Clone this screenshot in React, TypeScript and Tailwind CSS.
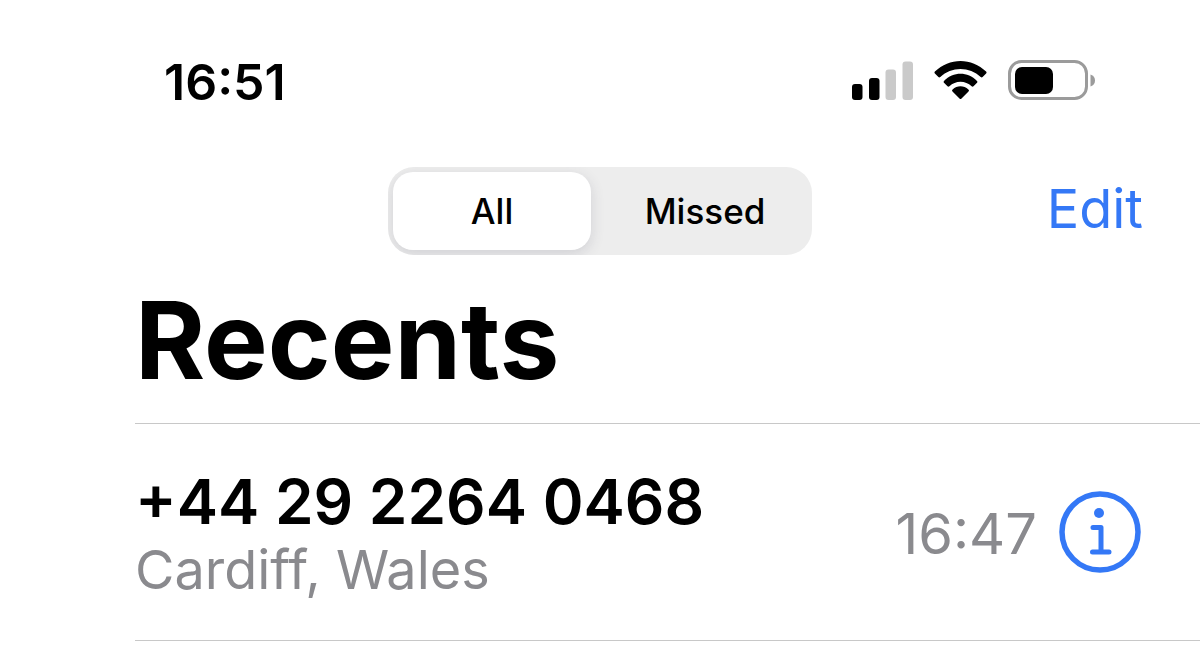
import { useState } from 'react'

interface Call {
  number: string
  place: string
  time: string
}

const calls: Call[] = [{ number: '+44 29 2264 0468', place: 'Cardiff, Wales', time: '16:47' }]

const tabs = ['All', 'Missed']

function SignalIcon() {
  return (
    <svg className="h-10 w-[62px]" viewBox="0 0 62 40" role="img" aria-label="Signal">
      <rect x="0" y="24" width="10.5" height="16" rx="3" fill="#000" />
      <rect x="17" y="18" width="10.5" height="22" rx="3" fill="#000" />
      <rect x="33.500" y="9.500" width="10.500" height="30.500" rx="3" fill="#cacaca" />
      <rect x="50.500" y="1.500" width="10.500" height="38.500" rx="3" fill="#cacaca" />
    </svg>
  )
}

function WifiIcon() {
  return (
    <svg className="h-10 w-[54px]" viewBox="0 0 54 40" role="img" aria-label="Wi-Fi">
      <path d="M.9 11.6C15.3-2.6 37.700-2.600 52.100 11.600Q53 12.500 52.100 13.400L48.600 17Q47.700 17.900 46.700 17C35.700 6.300 17.300 6.300 6.300 17Q5.300 17.900 4.400 17L.9 13.400Q0 12.500 .9 11.600Z" />
      <path d="M10 20.900C19.300 11.500 33.700 11.500 43 20.900Q44 21.900 43 22.800L39.500 26.300Q38.600 27.200 37.600 26.300C31.500 20.300 21.500 20.300 15.400 26.300Q14.400 27.200 13.500 26.300L10 22.800Q9 21.900 10 20.900Z" />
      <path d="M18.600 29.500C23.100 25.300 29.900 25.300 34.400 29.500Q35.600 30.500 34.500 31.500L27.500 38.600Q26.500 39.600 25.500 38.600L18.500 31.500Q17.400 30.500 18.600 29.500Z" />
    </svg>
  )
}

function BatteryIcon() {
  return (
    <svg className="h-10 w-[88px]" viewBox="0 0 88 40" role="img" aria-label="Battery">
      <rect x="1.5" y="1.5" width="77" height="37" rx="12" fill="none" stroke="#9b9b9b" strokeWidth="3" />
      <rect x="7" y="7" width="38" height="27" rx="7" />
      <path d="M82.5 14.5C88.5 16 88.5 25 82.5 26.5Z" fill="#9b9b9b" />
    </svg>
  )
}

function InfoIcon() {
  return (
    <svg className="h-[82px] w-[82px]" viewBox="0 0 82 82" fill="none" stroke="#3478f6" aria-hidden="true">
      <circle cx="41" cy="41" r="38" strokeWidth="5.5" />
      <circle cx="40" cy="22" r="5" fill="#3478f6" stroke="none" />
      <path d="M34 36.5H42V61M33.500 61H50" strokeWidth="5" strokeLinecap="round" strokeLinejoin="round" />
    </svg>
  )
}

export default function App() {
  const [active, setActive] = useState('All')

  return (
    <main className="bg-white pt-[50px] font-['Inter',sans-serif] text-black">
      <header className="flex h-16 items-center justify-between pr-[104px] pl-[164px]">
        <time className="text-[50px] leading-[64px] font-semibold">16:51</time>
        <div className="flex items-center gap-5 pb-1">
          <SignalIcon />
          <WifiIcon />
          <BatteryIcon />
        </div>
      </header>

      <nav className="mt-[53px] grid grid-cols-[1fr_424px_1fr] items-center px-[57px]">
        <div className="col-start-2 grid h-[88px] grid-cols-[198px_1fr] gap-3 overflow-hidden rounded-[26px] bg-[#ededed] p-[5px]">
          {tabs.map((tab) => (
            <button
              key={tab}
              type="button"
              aria-pressed={active === tab}
              onClick={() => setActive(tab)}
              className={
                active === tab
                  ? 'rounded-[20px] bg-white text-[35px] leading-10 font-medium shadow-[0_4px_14px_rgba(60,60,90,0.16)]'
                  : 'rounded-[20px] text-[35px] leading-10 font-medium'
              }
            >
              {tab}
            </button>
          ))}
        </div>
        <button type="button" className="justify-self-end pb-1 text-[54px] leading-[64px] text-[#3478f6]">
          Edit
        </button>
      </nav>

      <section className="pl-[135px]">
        <h1 className="pt-[25px] pb-[23px] text-[107px] leading-[120px] font-bold">Recents</h1>
        <ul>
          {calls.map((call) => (
            <li
              key={call.number}
              className="flex items-center justify-between border-y border-[#c8c8c8] py-[38px] pr-[59px]"
            >
              <div className="pt-1">
                <p className="text-[62px] leading-[72px] font-semibold">{call.number}</p>
                <p className="text-[54px] leading-[64px] text-[#8a8a8e]">{call.place}</p>
              </div>
              <div className="flex items-center gap-[22px]">
                <time className="pt-1 text-[56px] leading-[64px] text-[#8a8a8e]">{call.time}</time>
                <button type="button" aria-label="Call details">
                  <InfoIcon />
                </button>
              </div>
            </li>
          ))}
        </ul>
      </section>
    </main>
  )
}
